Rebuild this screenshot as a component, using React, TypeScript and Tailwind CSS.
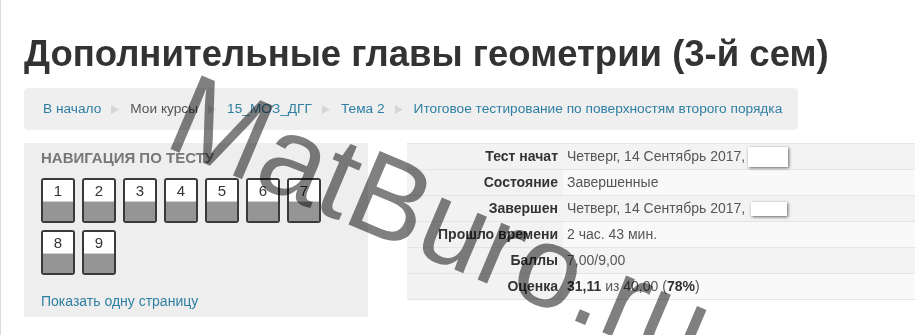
import React from 'react';

const crumbs = [
    { text: 'В начало', link: true },
    { text: 'Мои курсы', link: false },
    { text: '15_МОЗ_ДГГ', link: true },
    { text: 'Тема 2', link: true },
    { text: 'Итоговое тестирование по поверхностям второго порядка', link: true },
];

const rows = [
    { label: 'Тест начат', value: 'Четверг, 14 Сентябрь 2017,', hidden: 'big' },
    { label: 'Состояние', value: 'Завершенные' },
    { label: 'Завершен', value: 'Четверг, 14 Сентябрь 2017,', hidden: 'small' },
    { label: 'Прошло времени', value: '2 час. 43 мин.' },
    { label: 'Баллы', value: '7,00/9,00' },
    { label: 'Оценка', value: 'grade' },
];

const QuizButton: React.FC<{ n: number }> = ({ n }) => (
    <div className="w-[34px] h-[45px] rounded-[3px] border-2 border-[#3a3a3a] overflow-hidden flex flex-col">
        <div className="h-[21px] bg-white text-[15px] leading-[21px] text-center text-[#333]">{n}</div>
        <div className="flex-1 bg-[#959595] border-t border-[#cfcfcf]" />
    </div>
);

const Sep: React.FC = () => (
    <svg width="8" height="9" viewBox="0 0 8 9" className="ml-[10px] mr-[11px]">
        <path d="M0 0 L8 4.5 L0 9 Z" fill="#d6d6d6" />
    </svg>
);

const App: React.FC = () => {
    return (
        <div className="relative w-[915px] h-[335px] overflow-hidden bg-white border-l border-[#dcdcdc] font-['Liberation_Sans',Arial,sans-serif]">
            {/* Title */}
            <h1 className="pl-[23px] pt-[34px] text-[36.5px] leading-[40px] font-bold text-[#333]">
                Дополнительные главы геометрии (3-й сем)
            </h1>

            {/* Breadcrumb */}
            <div className="ml-[23px] mt-[14px] w-[774px] h-[42px] rounded-[4px] bg-[#efefef] flex items-center pl-[19px] text-[13.7px]">
                {crumbs.map((c, i) => (
                    <React.Fragment key={i}>
                        {i > 0 && <Sep />}
                        <span className={c.link ? 'text-[#2f7fa3]' : 'text-[#555]'}>{c.text}</span>
                    </React.Fragment>
                ))}
            </div>

            <div className="flex mt-[13px]">
                {/* Quiz navigation */}
                <div className="ml-[23px] w-[344px] h-[174px] bg-[#eeeeee] pl-[17px] pt-[6px]">
                    <div className="text-[15px] font-bold text-[#777] leading-[18px]">НАВИГАЦИЯ ПО ТЕСТУ</div>
                    <div className="mt-[11px] flex flex-wrap gap-x-[7px] gap-y-[7px] w-[290px]">
                        {[1, 2, 3, 4, 5, 6, 7, 8, 9].map((n) => (
                            <QuizButton key={n} n={n} />
                        ))}
                    </div>
                    <div className="mt-[16px] text-[14px] text-[#2f7fa3]">Показать одну страницу</div>
                </div>

                {/* Summary table */}
                <div className="ml-[39px] flex-1 border-t border-[#e6e6e6]">
                    {rows.map((r, i) => (
                        <div
                            key={i}
                            className={`flex h-[26px] items-center border-b border-[#e4e4e4] ${i % 2 === 0 ? 'bg-[#f3f3f3]' : 'bg-[#f9f9f9]'}`}
                        >
                            <div className="w-[156px] h-full flex items-center justify-end pr-[5px] text-[14px] font-bold text-[#333] bg-[#f2f2f2]">
                                {r.label}
                            </div>
                            <div className="pl-[4px] text-[14px] text-[#555] flex items-center">
                                {r.value === 'grade' ? (
                                    <span>
                                        <b className="text-[#333]">31,11</b> из 40,00 (<b className="text-[#333]">78%</b>)
                                    </span>
                                ) : (
                                    <span>{r.value}</span>
                                )}
                                {r.hidden === 'big' && <span className="ml-[3px] w-[40px] h-[20px] bg-white shadow-[1px_1px_3px_rgba(0,0,0,0.6)]" />}
                                {r.hidden === 'small' && <span className="ml-[6px] w-[36px] h-[14px] bg-white shadow-[1px_1px_3px_rgba(0,0,0,0.6)]" />}
                            </div>
                        </div>
                    ))}
                </div>
            </div>

            {/* Watermark */}
            <div className="pointer-events-none absolute left-[199px] top-[55px] origin-top-left rotate-[23deg] text-[116px] leading-none text-[#808080] mix-blend-multiply whitespace-nowrap">
                MatBuro.ru
            </div>
        </div>
    );
};

export default App;
